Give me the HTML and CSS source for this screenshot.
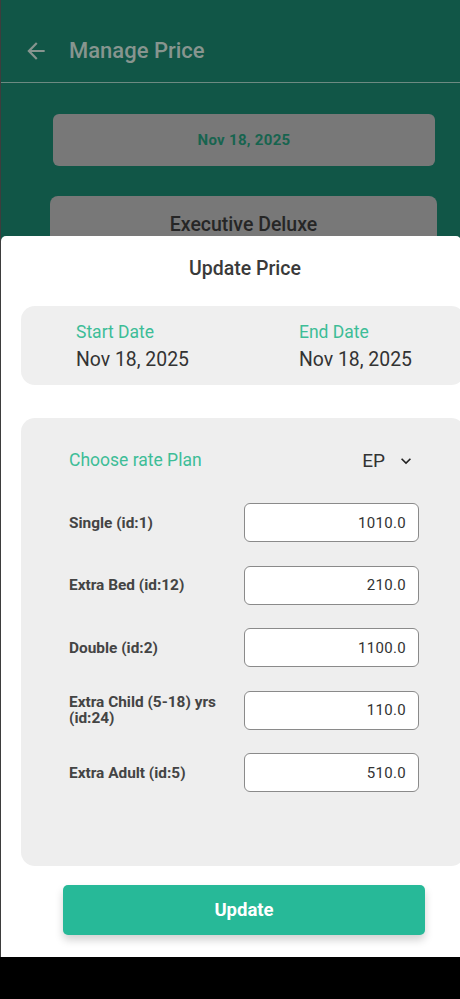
FILE: index.html
```html
<!DOCTYPE html>
<html>
<head>
<meta charset="utf-8">
<link rel="stylesheet" href="styles.css">
</head>
<body>
<div class="screen">
  <div class="backdrop">
    <header class="appbar">
      <svg class="back" width="26" height="26" viewBox="0 0 24 24"><path d="M20 11H7.83l5.59-5.59L12 4l-8 8 8 8 1.41-1.41L7.83 13H20v-2z" fill="#87958f"/></svg>
      <span class="appbar-title">Manage Price</span>
    </header>
    <div class="bg-content">
      <div class="bg-date">Nov 18, 2025</div>
      <div class="bg-room">Executive Deluxe</div>
    </div>
  </div>

  <div class="sheet">
    <div class="sheet-title">Update Price</div>
    <div class="card dates">
      <div class="date-col">
        <div class="date-label">Start Date</div>
        <div class="date-value">Nov 18, 2025</div>
      </div>
      <div class="date-col">
        <div class="date-label">End Date</div>
        <div class="date-value">Nov 18, 2025</div>
      </div>
    </div>
    <div class="card rates">
      <div class="plan-row">
        <span class="plan-label">Choose rate Plan</span>
        <span class="plan-select">EP
          <svg width="20" height="20" viewBox="0 0 24 24"><path d="M7.41 8.59L12 13.17l4.59-4.58L18 10l-6 6-6-6z" fill="#222"/></svg>
        </span>
      </div>
      <div class="rate-row"><span class="rate-label">Single (id:1)</span><div class="rate-input">1010.0</div></div>
      <div class="rate-row"><span class="rate-label">Extra Bed (id:12)</span><div class="rate-input">210.0</div></div>
      <div class="rate-row"><span class="rate-label">Double (id:2)</span><div class="rate-input">1100.0</div></div>
      <div class="rate-row"><span class="rate-label">Extra Child (5-18) yrs (id:24)</span><div class="rate-input">110.0</div></div>
      <div class="rate-row"><span class="rate-label">Extra Adult (id:5)</span><div class="rate-input">510.0</div></div>
    </div>
    <div class="btn-wrap"><button class="update-btn">Update</button></div>
  </div>
</div>
</body>
</html>
```

FILE: styles.css
```css
* { box-sizing: border-box; }
html, body { margin: 0; padding: 0; }
body {
  background: #000;
  font-family: Roboto, "Noto Sans", sans-serif;
  width: 460px;
  height: 999px;
  overflow: hidden;
}
.screen {
  position: relative;
  height: 957px;
  background: #115647;
  border-left: 1px solid #3d3d3d;
  overflow: hidden;
}
.appbar {
  height: 83px;
  display: flex;
  align-items: center;
  padding: 19px 0 0 22px;
  border-bottom: 1px solid #6d8a82;
}
.back { display: block; margin-right: 20px; }
.appbar-title {
  font-size: 22px;
  font-weight: 500;
  color: #87958f;
}
.bg-content {
  padding: 31px 0 0 0;
  display: flex;
  flex-direction: column;
  align-items: flex-start;
}
.bg-date {
  width: 382px;
  height: 52px;
  margin-left: 52px;
  background: #787878;
  border-radius: 6px;
  display: flex;
  align-items: center;
  justify-content: center;
  font-size: 15px;
  font-weight: 700;
  color: #17644f;
  letter-spacing: 0.3px;
}
.bg-room {
  margin-top: 30px;
  width: 387px;
  height: 80px;
  margin-left: 49px;
  background: #787878;
  border-radius: 8px;
  padding-top: 17px;
  text-align: center;
  font-size: 19.5px;
  font-weight: 500;
  color: #262626;
}
.sheet {
  position: absolute;
  left: 0;
  top: 236px;
  width: 460px;
  bottom: 0;
  background: #fff;
  border-top-left-radius: 5px;
  border-top-right-radius: 5px;
}
.sheet-title {
  padding-top: 21px;
  line-height: 24px;
  text-align: center;
  font-size: 19.5px;
  font-weight: 500;
  color: #3a3a3a;
  padding-left: 28px;
}
.card {
  background: #efefef;
  border-radius: 14px;
  margin-left: 20px;
  margin-right: -4px;
}
.dates {
  margin-top: 25px;
  height: 79px;
  display: flex;
  padding: 16px 0 0 55px;
}
.date-col { width: 223px; flex-shrink: 0; }
.date-label {
  font-size: 17.5px;
  line-height: 20px;
  color: #3dbd97;
}
.date-value {
  margin-top: 6px;
  font-size: 19.4px;
  line-height: 24px;
  color: #333;
}
.rates {
  margin-top: 33px;
  height: 448px;
  padding: 30px 0 0 48px;
  background: #eeeeee;
  display: flex;
  flex-direction: column;
}
.plan-row {
  display: flex;
  align-items: center;
  justify-content: space-between;
  width: 347px;
  height: 24px;
  margin-bottom: 31px;
}
.plan-label {
  font-size: 17.5px;
  color: #3dbd97;
}
.plan-select {
  display: flex;
  align-items: center;
  gap: 11px;
  font-size: 19px;
  color: #333;
}
.plan-select svg { display: block; margin-top: 1px; }
.rate-row {
  display: flex;
  align-items: center;
  height: 39px;
  margin-bottom: 23.5px;
}
.rate-label {
  width: 175px;
  flex-shrink: 0;
  padding-right: 8px;
  font-size: 15.4px;
  font-weight: 700;
  line-height: 16px;
  color: #444;
}
.rate-input {
  width: 175px;
  height: 39px;
  background: #fff;
  border: 1px solid #8a8a8a;
  border-radius: 6px;
  display: flex;
  align-items: center;
  justify-content: flex-end;
  padding-right: 12px;
  font-size: 15px;
  color: #333;
  letter-spacing: 0.3px;
}
.btn-wrap {
  padding: 19px 0 0 62px;
}
.update-btn {
  width: 362px;
  height: 50px;
  border: none;
  border-radius: 5px;
  background: #27b998;
  color: #fff;
  font-family: Roboto, "Noto Sans", sans-serif;
  font-size: 18.5px;
  font-weight: 700;
  box-shadow: 0 5px 8px rgba(0, 0, 0, 0.18);
}
```
